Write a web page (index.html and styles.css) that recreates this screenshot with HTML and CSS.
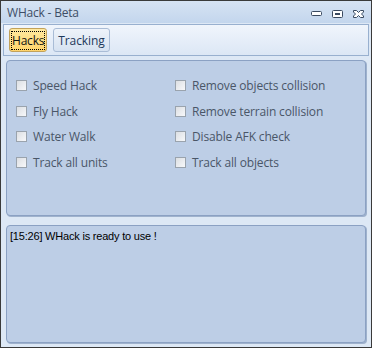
FILE: index.html
```html
<!DOCTYPE html>
<html lang="en">
<head>
    <meta charset="UTF-8">
    <title>WHack - Beta</title>
    <link rel="stylesheet" href="styles.css">
</head>
<body>
    <div class="window">
        <div class="titlebar">
            <span class="title">WHack - Beta</span>
            <div class="controls">
                <svg width="11" height="6" viewBox="0 0 11 6"><rect x="0.5" y="0.5" width="10" height="4" rx="1" fill="#fff" stroke="#3a4a60"/></svg>
                <svg width="11" height="8" viewBox="0 0 11 8"><rect x="0.5" y="0.5" width="10" height="7" rx="1" fill="#fff" stroke="#3a4a60"/><rect x="3" y="3" width="5" height="2" fill="#3a4a60"/></svg>
                <svg width="11" height="8" viewBox="0 0 11 8"><path d="M0.5 0.5h3l2 2 2-2h3v1.5l-2 2 2 2v1.5h-3l-2-2-2 2h-3v-1.5l2-2-2-2z" fill="#fff" stroke="#3a4a60" stroke-linejoin="round"/></svg>
            </div>
        </div>
        <div class="toolbar">
            <button class="tab active"><span>Hacks</span></button>
            <button class="tab">Tracking</button>
        </div>
        <div class="panel options">
            <label class="check"><span class="box"></span>Speed Hack</label>
            <label class="check"><span class="box"></span>Remove objects collision</label>
            <label class="check"><span class="box"></span>Fly Hack</label>
            <label class="check"><span class="box"></span>Remove terrain collision</label>
            <label class="check"><span class="box"></span>Water Walk</label>
            <label class="check"><span class="box"></span>Disable AFK check</label>
            <label class="check"><span class="box"></span>Track all units</label>
            <label class="check"><span class="box"></span>Track all objects</label>
        </div>
        <div class="panel log">[15:26] WHack is ready to use !</div>
    </div>
</body>
</html>
```

FILE: styles.css
```css
body {
    margin: 0;
    font-family: "Open Sans", "Noto Sans", sans-serif;
}
.window {
    width: 372px;
    height: 348px;
    box-sizing: border-box;
    border: 1px solid #3a3a3a;
    background: #dde8f5;
    display: flex;
    flex-direction: column;
}
.titlebar {
    height: 22px;
    flex: none;
    display: flex;
    align-items: center;
    justify-content: space-between;
    padding: 0 7px 0 6px;
    background: linear-gradient(#d6e3f3, #c3d6ed);
}
.title {
    font-size: 12px;
    color: #3e4e66;
    letter-spacing: -0.2px;
}
.controls {
    display: flex;
    align-items: center;
    gap: 10px;
    margin-top: 3px;
}
.toolbar {
    flex: none;
    margin: 1px 2px 0 2px;
    height: 30px;
    border: 1px solid #98b0cf;
    background: linear-gradient(#f0f5fc, #dce7f5);
    display: flex;
    align-items: center;
    gap: 6px;
    padding: 0 5px;
}
.tab {
    height: 24px;
    padding: 0 4px;
    font-family: inherit;
    font-size: 12px;
    letter-spacing: -0.1px;
    color: #1e395b;
    border: 1px solid #a9bcd6;
    border-radius: 3px;
    background: linear-gradient(#eef3fa, #d6e2f1);
}
.tab.active {
    padding: 0 1px;
    letter-spacing: -0.2px;
    color: #111;
    border-color: #c2a25a;
    background: linear-gradient(#ffe9a0, #ffd36a);
}
.tab.active span {
    border: 1px dotted #000;
    padding: 0;
}
.panel {
    flex: none;
    margin: 0 5px;
    box-sizing: border-box;
    background: #bdcee6;
    border: 1px solid #8ba1c3;
    border-radius: 4px;
    box-shadow: 1px 1px 0 #9fb2cd;
}
.options {
    margin-top: 4px;
    height: 156px;
    display: grid;
    grid-template-columns: 159px 1fr;
    grid-auto-rows: 25.5px;
    align-content: start;
    padding: 12px 0 0 9px;
}
.check {
    display: flex;
    align-items: center;
    gap: 6px;
    font-size: 12px;
    letter-spacing: -0.15px;
    color: #4a5668;
}
.box {
    width: 9px;
    height: 9px;
    border: 1px solid #9aa3ad;
    background: linear-gradient(135deg, #dcdfe3, #f7f8fa);
}
.log {
    margin-top: 9px;
    height: 118px;
    padding: 4px 3px;
    font-family: "Liberation Sans", Arial, sans-serif;
    font-size: 11px;
    letter-spacing: -0.2px;
    color: #000;
}
```
